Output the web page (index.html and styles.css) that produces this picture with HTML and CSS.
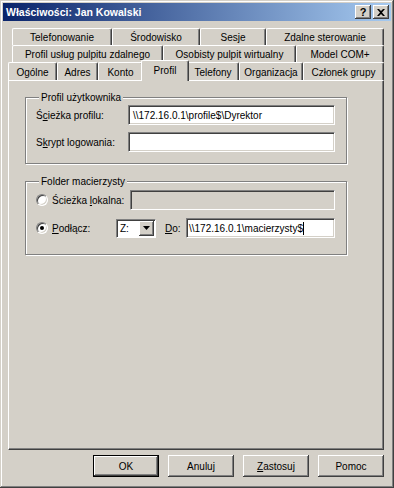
FILE: index.html
```html
<!DOCTYPE html>
<html lang="pl">
<head>
    <meta charset="UTF-8">
    <title>Właściwości: Jan Kowalski</title>
    <link rel="stylesheet" href="styles.css">
</head>
<body>
    <div class="window">
        <div class="titlebar">
            <span class="title">Właściwości: Jan Kowalski</span>
            <div class="title-buttons">
                <span class="tbtn help">?</span>
                <span class="tbtn close">
                    <svg width="8" height="7" viewBox="0 0 8 7"><path d="M0 0h2l2 2 2-2h2L5 3.5 8 7H6L4 5 2 7H0l3-3.5z" fill="#000"/></svg>
                </span>
            </div>
        </div>

        <div class="tabs">
            <div class="tab-row back">
                <div class="tab w-telefonowanie">Telefonowanie</div>
                <div class="tab w-srodowisko">Środowisko</div>
                <div class="tab w-sesje">Sesje</div>
                <div class="tab w-zdalne">Zdalne sterowanie</div>
            </div>
            <div class="tab-row back">
                <div class="tab w-profil-uslug">Profil usług pulpitu zdalnego</div>
                <div class="tab w-osobisty">Osobisty pulpit wirtualny</div>
                <div class="tab w-com">Model COM+</div>
            </div>
            <div class="tab-row front">
                <div class="tab w-ogolne">Ogólne</div>
                <div class="tab w-adres">Adres</div>
                <div class="tab w-konto">Konto</div>
                <div class="tab w-profil active">Profil</div>
                <div class="tab w-telefony">Telefony</div>
                <div class="tab w-organizacja">Organizacja</div>
                <div class="tab w-czlonek">Członek grupy</div>
            </div>
        </div>

        <div class="panel">
            <fieldset class="group profile-group">
                <legend>Profil użytkownika</legend>
                <div class="form-row">
                    <label>Ś<u>c</u>ieżka profilu:</label>
                    <div class="field">\\172.16.0.1\profile$\Dyrektor</div>
                </div>
                <div class="form-row">
                    <label>S<u>k</u>rypt logowania:</label>
                    <div class="field"></div>
                </div>
            </fieldset>

            <fieldset class="group home-group">
                <legend>Folder macierzysty</legend>
                <div class="radio-row">
                    <span class="radio"></span>
                    <label class="radio-label">Ścieżka <u>l</u>okalna:</label>
                    <div class="field disabled local"></div>
                </div>
                <div class="radio-row">
                    <span class="radio checked"></span>
                    <label class="radio-label podlacz"><u>P</u>odłącz:</label>
                    <div class="combo">
                        <span class="combo-value">Z:</span>
                        <span class="combo-btn">
                            <svg width="7" height="4" viewBox="0 0 7 4"><path d="M0 0h7L3.5 4z" fill="#000"/></svg>
                        </span>
                    </div>
                    <label class="do-label"><u>D</u>o:</label>
                    <div class="field to">\\172.16.0.1\macierzysty$<span class="caret"></span></div>
                </div>
            </fieldset>
        </div>

        <div class="buttons">
            <button class="btn default">OK</button>
            <button class="btn">Anuluj</button>
            <button class="btn"><u>Z</u>astosuj</button>
            <button class="btn">Pomoc</button>
        </div>
    </div>
</body>
</html>
```

FILE: styles.css
```css
body, html {
    margin: 0;
    padding: 0;
    background-color: #d4d0c8;
}
body {
    font-family: "Liberation Sans", Arial, sans-serif;
    font-size: 10px;
    color: #000;
}
u {
    text-decoration: underline;
    text-underline-offset: 1px;
}
.window {
    width: 394px;
    height: 488px;
    box-sizing: border-box;
    padding: 3px;
    background-color: #d4d0c8;
    box-shadow: inset -1px -1px #404040, inset 1px 1px #d4d0c8, inset -2px -2px #808080, inset 2px 2px #fff;
    display: flex;
    flex-direction: column;
}

/* pasek tytulu */
.titlebar {
    height: 18px;
    flex-shrink: 0;
    background: linear-gradient(to right, #0a246a, #a6caf0);
    display: flex;
    align-items: center;
    justify-content: space-between;
    padding: 0 2px 0 3px;
}
.title {
    color: #fff;
    font-weight: bold;
    font-size: 10.5px;
}
.title-buttons {
    display: flex;
    gap: 2px;
}
.tbtn {
    width: 16px;
    height: 14px;
    box-sizing: border-box;
    background-color: #d4d0c8;
    box-shadow: inset -1px -1px #404040, inset 1px 1px #fff, inset -2px -2px #808080;
    display: flex;
    align-items: center;
    justify-content: center;
    font-weight: bold;
    font-size: 11px;
    line-height: 14px;
}

/* zakladki */
.tabs {
    margin-top: 7px;
    display: flex;
    flex-direction: column;
}
.tab-row {
    display: flex;
    height: 17px;
}
.tab-row.back {
    margin-left: 9px;
}
.tab-row.front {
    margin-left: 5px;
    height: 18px;
    position: relative;
    z-index: 1;
}
.tab {
    box-sizing: border-box;
    height: 100%;
    border-top: 1px solid #fff;
    border-left: 1px solid #fff;
    border-right: 1px solid #404040;
    border-radius: 2px 2px 0 0;
    box-shadow: inset -1px 0 #808080;
    background-color: #d4d0c8;
    display: flex;
    align-items: center;
    justify-content: center;
    white-space: nowrap;
    padding-top: 1px;
}
.tab.active {
    height: 21px;
    margin: -2px -2px -1px;
    padding-top: 0;
    padding-bottom: 2px;
    position: relative;
    z-index: 2;
}
.w-telefonowanie { width: 100px; }
.w-srodowisko { width: 88px; }
.w-sesje { width: 66px; }
.w-zdalne { width: 118px; }
.w-profil-uslug { width: 151px; }
.w-osobisty { width: 133px; }
.w-com { width: 88px; }
.w-ogolne { width: 49px; }
.w-adres { width: 41px; }
.w-konto { width: 45px; }
.w-profil { width: 48px; }
.w-telefony { width: 52px; }
.w-organizacja { width: 64px; }
.w-czlonek { width: 81px; }

/* panel zakladki */
.panel {
    margin-left: 5px;
    width: 376px;
    height: 370px;
    box-sizing: border-box;
    border-top: 1px solid #fff;
    border-left: 1px solid #fff;
    border-right: 1px solid #404040;
    border-bottom: 1px solid #404040;
    box-shadow: inset -1px -1px #808080;
    padding: 11px 0 0 16px;
}
.group {
    margin: 0;
    width: 322px;
    box-sizing: border-box;
    border: 1px solid #808080;
    box-shadow: 1px 1px #fff, inset 1px 1px #fff;
    padding: 2px 11px 0 10px;
}
.group legend {
    padding: 0 2px;
    margin-left: 3px;
    background-color: #d4d0c8;
}
.profile-group {
    height: 72px;
}
.home-group {
    margin-top: 12px;
    height: 79px;
}
.form-row {
    display: grid;
    grid-template-columns: 92px 1fr;
    align-items: center;
    margin-bottom: 7px;
}
.field {
    height: 20px;
    box-sizing: border-box;
    background-color: #fff;
    border-top: 1px solid #808080;
    border-left: 1px solid #808080;
    border-right: 1px solid #fff;
    border-bottom: 1px solid #fff;
    box-shadow: inset 1px 1px #404040, inset -1px -1px #d4d0c8;
    padding: 0 4px;
    display: flex;
    align-items: center;
    white-space: nowrap;
}
.field.disabled {
    background-color: #d4d0c8;
}
.radio-row {
    display: flex;
    align-items: center;
    height: 20px;
    margin-top: 8px;
}
.home-group .radio-row:first-of-type {
    margin-top: 1px;
}
.radio {
    width: 12px;
    height: 12px;
    box-sizing: border-box;
    border-radius: 50%;
    background-color: #fff;
    border: 1px solid;
    border-color: #808080 #fff #fff #808080;
    box-shadow: inset 1px 1px #404040, inset -1px -1px #d4d0c8;
    margin-right: 4px;
    display: flex;
    align-items: center;
    justify-content: center;
}
.radio.checked::after {
    content: "";
    width: 4px;
    height: 4px;
    border-radius: 50%;
    background-color: #000;
}
.radio-label {
    width: 78px;
    flex-shrink: 0;
}
.field.local {
    flex: 1;
}
.podlacz {
    width: 64px;
}
.combo {
    width: 40px;
    height: 19px;
    box-sizing: border-box;
    background-color: #fff;
    border-top: 1px solid #808080;
    border-left: 1px solid #808080;
    border-right: 1px solid #fff;
    border-bottom: 1px solid #fff;
    box-shadow: inset 1px 1px #404040;
    display: flex;
    align-items: stretch;
    padding: 1px 1px 1px 1px;
}
.combo-value {
    flex: 1;
    display: flex;
    align-items: center;
    padding-left: 2px;
}
.combo-btn {
    width: 15px;
    background-color: #d4d0c8;
    box-shadow: inset -1px -1px #404040, inset 1px 1px #fff, inset -2px -2px #808080;
    display: flex;
    align-items: center;
    justify-content: center;
}
.do-label {
    margin-left: 9px;
    width: 21px;
}
.field.to {
    flex: 1;
    padding-left: 2px;
}
.caret {
    width: 1px;
    height: 13px;
    background-color: #000;
}

/* przyciski */
.buttons {
    display: flex;
    justify-content: flex-end;
    gap: 9px;
    padding-right: 7px;
    margin-top: 5px;
}
.btn {
    width: 66px;
    height: 22px;
    box-sizing: border-box;
    font-family: "Liberation Sans", Arial, sans-serif;
    font-size: 10px;
    color: #000;
    background-color: #d4d0c8;
    border: none;
    box-shadow: inset -1px -1px #404040, inset 1px 1px #fff, inset -2px -2px #808080;
    padding: 0;
}
.btn.default {
    border: 1px solid #000;
    box-shadow: inset -1px -1px #404040, inset 1px 1px #fff, inset -2px -2px #808080;
}
```
